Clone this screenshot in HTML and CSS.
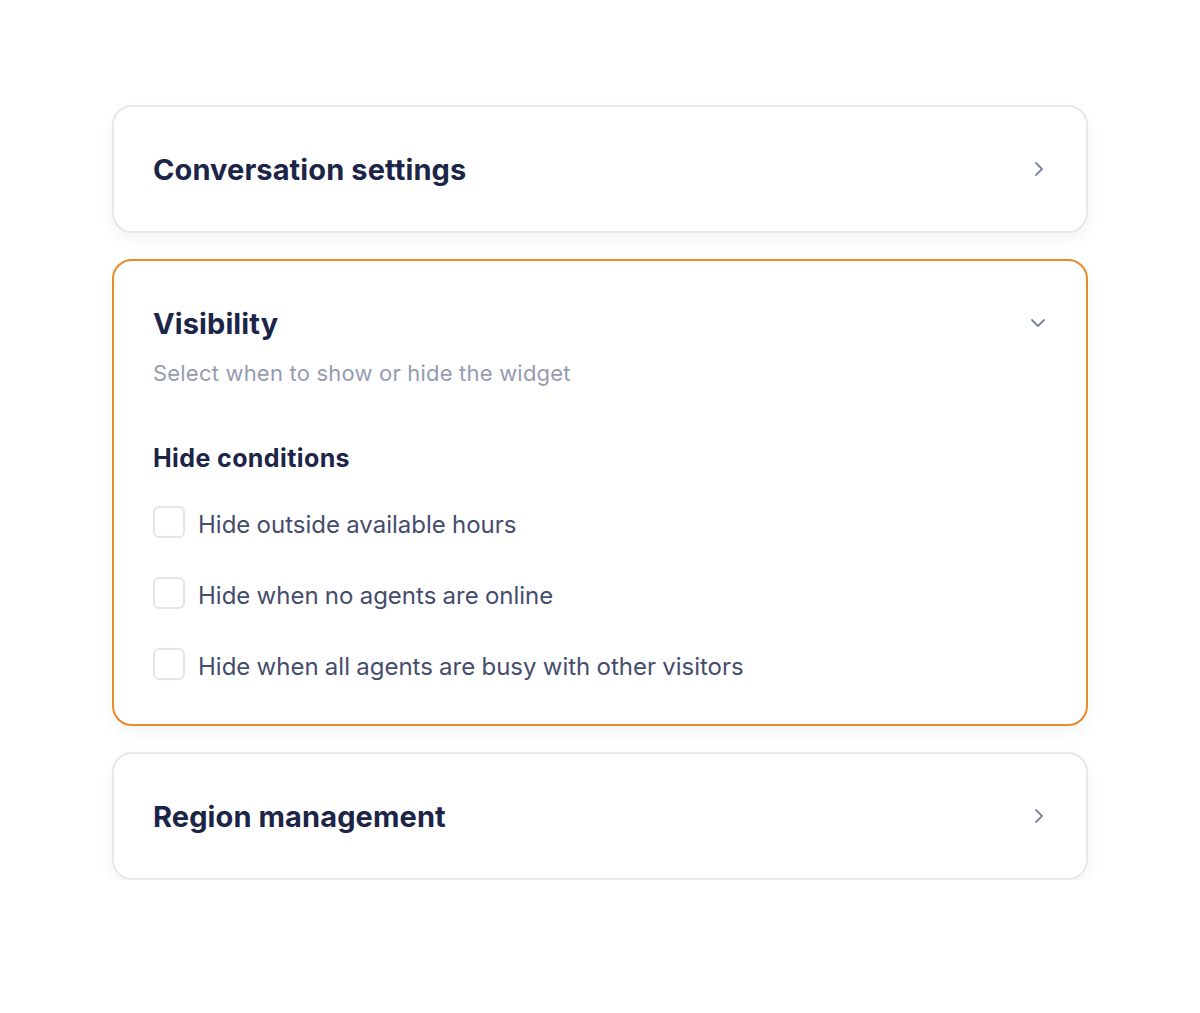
FILE: index.html
```html
<!DOCTYPE html>
<html>
<head>
<meta charset="utf-8">
<link rel="stylesheet" href="styles.css">
</head>
<body>
<main class="stack">
  <section class="card">
    <div class="card-head">
      <h2 class="card-title">Conversation settings</h2>
      <svg class="chev chev-right" width="10" height="16" viewBox="0 0 10 16"><path d="M2 2l6 6-6 6" fill="none" stroke="currentColor" stroke-width="1.8" stroke-linecap="round" stroke-linejoin="round"/></svg>
    </div>
  </section>
  <section class="card card-open">
    <div class="card-head">
      <h2 class="card-title">Visibility</h2>
      <svg class="chev chev-down" width="16" height="10" viewBox="0 0 16 10"><path d="M2 2l6 6 6-6" fill="none" stroke="currentColor" stroke-width="1.8" stroke-linecap="round" stroke-linejoin="round"/></svg>
    </div>
    <p class="subtitle">Select when to show or hide the widget</p>
    <h3 class="section-title">Hide conditions</h3>
    <ul class="options">
      <li class="option"><span class="box"></span><span class="label">Hide outside available hours</span></li>
      <li class="option"><span class="box"></span><span class="label">Hide when no agents are online</span></li>
      <li class="option"><span class="box"></span><span class="label">Hide when all agents are busy with other visitors</span></li>
    </ul>
  </section>
  <section class="card">
    <div class="card-head">
      <h2 class="card-title">Region management</h2>
      <svg class="chev chev-right" width="10" height="16" viewBox="0 0 10 16"><path d="M2 2l6 6-6 6" fill="none" stroke="currentColor" stroke-width="1.8" stroke-linecap="round" stroke-linejoin="round"/></svg>
    </div>
  </section>
</main>
</body>
</html>
```
FILE: styles.css
```css
* { box-sizing: border-box; }
html, body { margin: 0; padding: 0; background: #ffffff; }
body {
  font-family: Inter, "Noto Sans", sans-serif;
  color: #1c2548;
}
.stack {
  width: 976px;
  margin: 105px 0 0 112px;
  display: flex;
  flex-direction: column;
  gap: 26px;
}
.card {
  background: #fff;
  border: 2px solid #e6e7ef;
  border-radius: 20px;
  padding: 0 40px 0 39px;
  box-shadow: 0 6px 16px rgba(30, 40, 80, 0.05);
}
.card-open {
  border-color: #ea8a2c;
  padding: 38px 40px 44px 39px;
}
.card-head {
  display: flex;
  align-items: center;
  justify-content: space-between;
  height: 124px;
}
.card-open .card-head { height: 48px; }
.card-title {
  margin: 0;
  font-size: 29px;
  font-weight: 700;
  letter-spacing: 0.1px;
  color: #1c2548;
}
.chev { color: #7c829b; flex: none; }
.chev-right { margin-right: 2px; }
.chev-down { margin-right: 0; }
.subtitle {
  margin: 10px 0 0;
  font-size: 22px;
  color: #959cb0;
  line-height: 32px;
  letter-spacing: 0.2px;
}
.section-title {
  margin: 53px 0 0;
  font-size: 25px;
  font-weight: 700;
  color: #1c2548;
  line-height: 32px;
  letter-spacing: 0.4px;
}
.options {
  list-style: none;
  margin: 32px 0 0;
  padding: 0;
  display: flex;
  flex-direction: column;
  gap: 39px;
}
.option {
  display: flex;
  align-items: center;
  gap: 13px;
  height: 32px;
}
.box {
  width: 32px;
  height: 32px;
  border: 2px solid #e3e5ec;
  border-radius: 6px;
  flex: none;
}
.label {
  font-size: 24px;
  color: #454d6c;
  word-spacing: -0.5px;
  position: relative;
  top: 2px;
}
```
